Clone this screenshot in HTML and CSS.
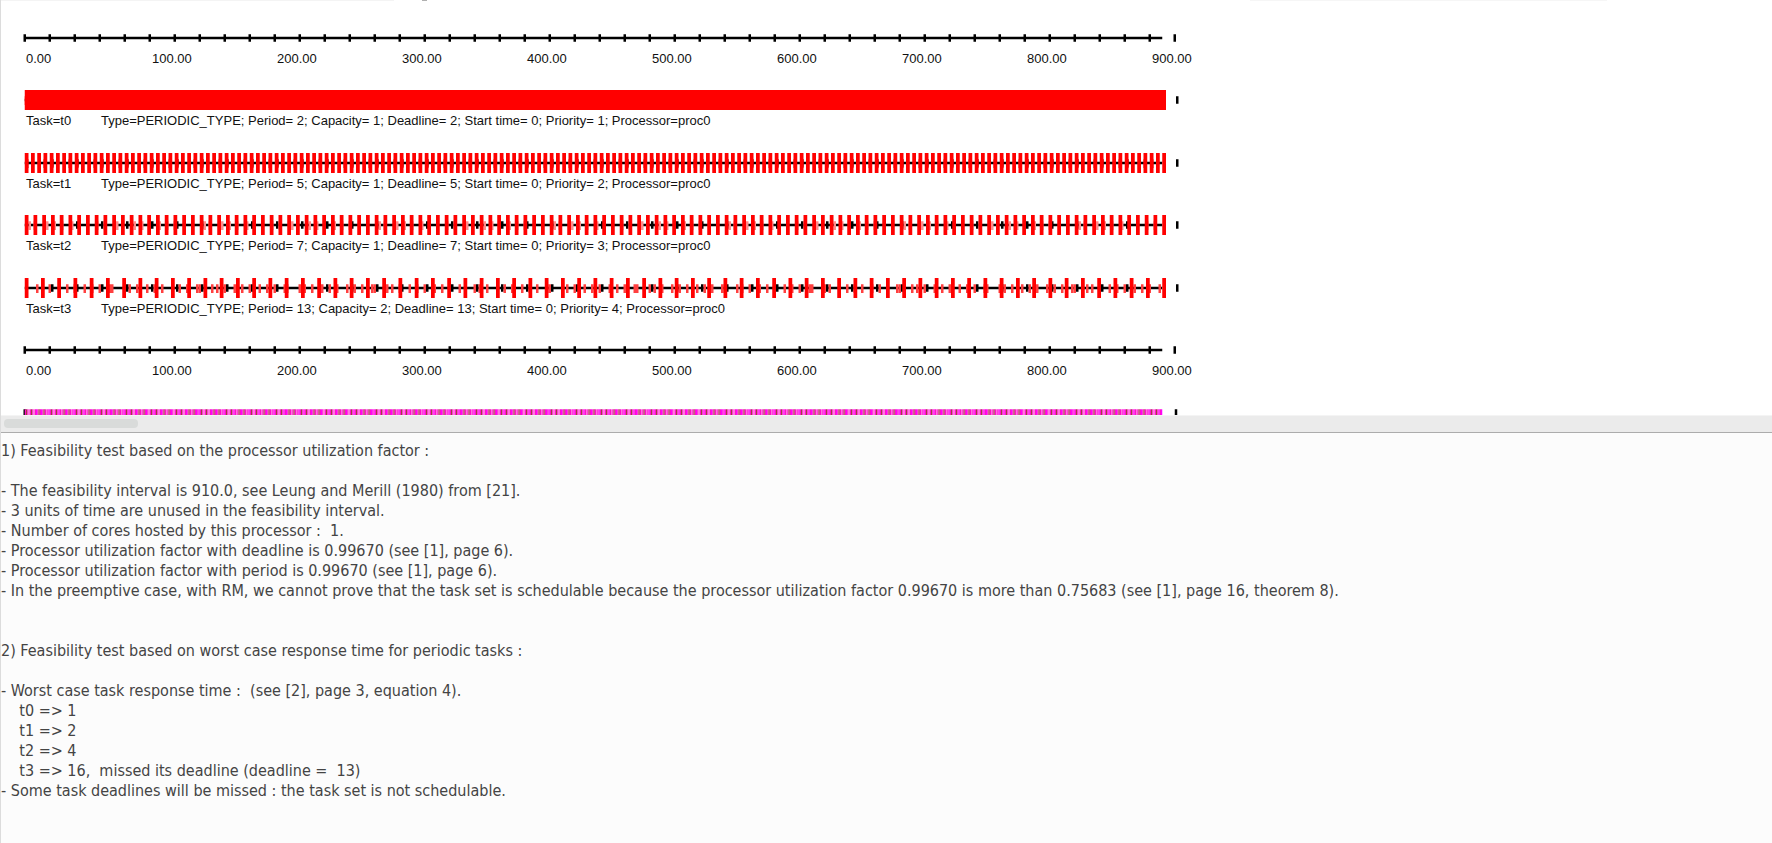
FILE: index.html
```html
<!DOCTYPE html>
<html lang="en">
<head>
<meta charset="utf-8">
<title>Scheduling analysis</title>
<link rel="stylesheet" href="styles.css">
</head>
<body>
<main class="window">
  <section class="chart" aria-label="Scheduling time line">
    <div class="toolbar-edge"><i class="edge-left"></i><i class="edge-dot"></i><i class="edge-right"></i></div>
    <div class="rows" id="rows"></div>
  </section>
  <div class="scrollbar"><div class="thumb"></div></div>
  <section class="report">
<pre class="report-text">1) Feasibility test based on the processor utilization factor :

- The feasibility interval is 910.0, see Leung and Merill (1980) from [21].
- 3 units of time are unused in the feasibility interval.
- Number of cores hosted by this processor :  1.
- Processor utilization factor with deadline is 0.99670 (see [1], page 6).
- Processor utilization factor with period is 0.99670 (see [1], page 6).
- In the preemptive case, with RM, we cannot prove that the task set is schedulable because the processor utilization factor 0.99670 is more than 0.75683 (see [1], page 16, theorem 8).


2) Feasibility test based on worst case response time for periodic tasks :

- Worst case task response time :  (see [2], page 3, equation 4).
    t0 =&gt; 1
    t1 =&gt; 2
    t2 =&gt; 4
    t3 =&gt; 16,  missed its deadline (deadline =  13)
- Some task deadlines will be missed : the task set is not schedulable.</pre>
  </section>
</main>
<script src="chart.js"></script>
</body>
</html>
```

FILE: styles.css
```css
* { box-sizing: border-box; }
body { margin: 0; background: #fcfcfc; }
.window { min-height: 100vh; display: flex; flex-direction: column; border-left: 1px solid #dcdcdc; overflow: hidden; }
.chart { background: #fff; overflow: hidden; }
.toolbar-edge { display: flex; height: 1px; margin-bottom: 27px; }
.edge-left { width: 393px; background: #f4f4f4; }
.edge-dot { width: 5px; margin-left: 28px; background: #b0b0b0; }
.edge-right { width: 357px; margin-left: 823px; background: #f6f6f6; }
.row { height: 62px; font: 13px/22px "Liberation Sans", Arial, sans-serif; color: #111; white-space: nowrap; }
.row:nth-child(even) { height: 63px; }
.row:last-child { height: 12px; overflow: hidden; }
.lane { display: block; width: 1200px; height: 20px; }
.scale { display: flex; padding-left: 25px; }
.scale span { flex: 0 0 125px; }
.scale span:nth-child(n+2) { padding-left: 1px; }
.task { display: grid; grid-template-columns: 75px 1fr; padding-left: 25px; }
.line { fill: #000; }
.release, .run-t0, .run-t1 { fill: #f00; }
.run-t2 { fill: #ff8c8c; }
.run-t3 { fill: #ff4040; }
.cpu-t0 { fill: #ff10c8; }
.cpu-t1 { fill: #a04040; }
.cpu-t2 { fill: #ff70e0; }
.cpu-t3 { fill: #f0f; }
.cpu-idle { fill: #f0f; }
.scrollbar { height: 18px; padding: 3px 3px; background: #ebebeb; border-top: 1px solid #f4f4f4; border-bottom: 1px solid #acacac; }
.thumb { width: 134px; height: 9px; border-radius: 4px; background: #d9dbda; }
.report { flex: 1; padding-top: 8px; background: #fcfcfc; }
.report-text { margin: 0; font: 16px/20px "DejaVu Sans Condensed", "DejaVu Sans", sans-serif; color: #444; }
```

FILE: chart.js
```js
// Rate-monotonic schedule of four periodic tasks on one processor.
// One time unit is one unit of the lane's view box.
const START = 20, HORIZON = 910;
const tasks = [
  { name: "t0", period: 2, capacity: 1, priority: 1 },
  { name: "t1", period: 5, capacity: 1, priority: 2 },
  { name: "t2", period: 7, capacity: 1, priority: 3 },
  { name: "t3", period: 13, capacity: 2, priority: 4 }
];

const pending = tasks.map(() => 0);
const slots = [];
for (let t = 0; t < HORIZON; t++) {
  tasks.forEach((task, i) => { if (t % task.period === 0) pending[i] += task.capacity; });
  const i = pending.findIndex(n => n > 0);
  if (i >= 0) pending[i]--;
  slots.push(i);
}

const rect = (cls, x, y, w, h) =>
  `<rect class="${cls}" x="${x}" y="${y}" width="${w}" height="${h}"/>`;
const lane = body => `<svg class="lane" viewBox="1 0 960 16">${body}</svg>`;

function ticks(first, origin) {
  let out = "";
  for (let t = first; t <= 920; t += 20) if (t !== 900 || first === 0) out += rect("line", origin + t, 5, 2, 6);
  return out;
}

function axisRow() {
  let labels = "";
  for (let t = 0; t <= 900; t += 100) labels += `<span>${t}.00</span>`;
  const body = rect("line", START, 7, HORIZON, 2) + ticks(0, START - 1);
  return `<div class="row">${lane(body)}<div class="scale">${labels}</div></div>`;
}

function taskRow(task, index) {
  let body = rect("line", START, 7, HORIZON, 2) + ticks(20, START + 1);
  slots.forEach((s, t) => {
    if (s === index) body += rect("run-" + task.name, START + t, 5, 2, 7);
  });
  for (let t = 0; t <= HORIZON; t += task.period) body += rect("release", START + t, 0, 3, 16);
  return `<div class="row">${lane(body)}<div class="task"><span>Task=${task.name}</span>` +
    `<span>Type=PERIODIC_TYPE; Period= ${task.period}; Capacity= ${task.capacity}; Deadline= ${task.period}; ` +
    `Start time= 0; Priority= ${task.priority}; Processor=proc0</span></div></div>`;
}

function processorRow() {
  let body = rect("line", START - 1, 5, 2, 11);
  slots.forEach((s, t) => { body += rect(s < 0 ? "cpu-idle" : "cpu-t" + s, START + t, 5, 1, 11); });
  return `<div class="row">${lane(body + rect("line", START + 920, 5, 2, 11))}</div>`;
}

document.getElementById("rows").innerHTML =
  axisRow() + tasks.map(taskRow).join("") + axisRow() + processorRow();
```
